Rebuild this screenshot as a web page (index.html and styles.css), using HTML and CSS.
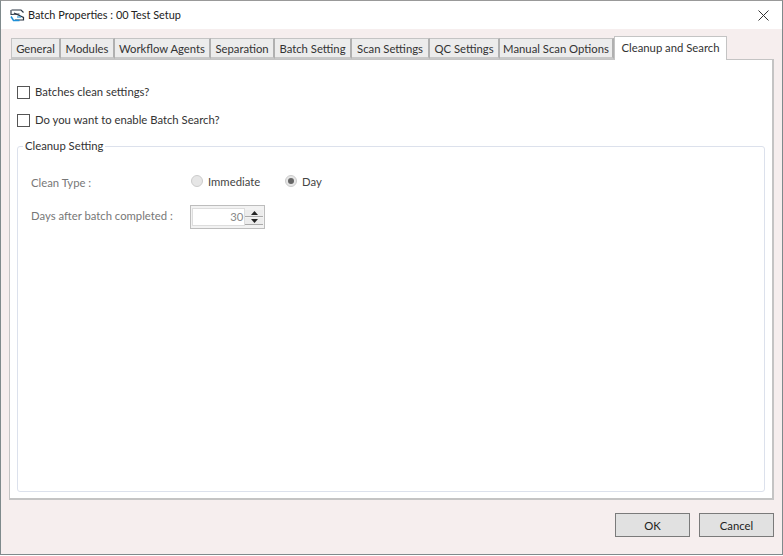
FILE: index.html
```html
<!DOCTYPE html>
<html lang="en">
<head>
<meta charset="utf-8">
<title>Batch Properties</title>
<link rel="stylesheet" href="styles.css">
</head>
<body>
<div class="window">
  <header class="titlebar">
    <svg class="app-icon" width="15" height="13" viewBox="0 0 15 13" fill="none">
      <path d="M1.5 1H11L13.5 3.5" stroke="#2a3442" stroke-width="1.2"/>
      <path d="M1 1V5.5L9.5 5" stroke="#2a3442" stroke-width="1.1"/>
      <path d="M4 4L13.5 8.5V11H5" stroke="#2a3442" stroke-width="1.2"/>
      <path d="M1 7.5L3.5 11.5H9.5" stroke="#1e90d8" stroke-width="1.5"/>
      <path d="M7 8H11" stroke="#1e90d8" stroke-width="1.1"/>
    </svg>
    <span class="title">Batch Properties : 00 Test Setup</span>
    <svg class="close" width="11" height="11" viewBox="0 0 11 11" fill="none">
      <path d="M.5 .5L10.5 10.5M10.5 .5L.5 10.5" stroke="#333" stroke-width="1"/>
    </svg>
  </header>
  <main class="body">
    <nav class="tabs">
      <span class="tab">General</span>
      <span class="tab">Modules</span>
      <span class="tab">Workflow Agents</span>
      <span class="tab">Separation</span>
      <span class="tab">Batch Setting</span>
      <span class="tab">Scan Settings</span>
      <span class="tab">QC Settings</span>
      <span class="tab">Manual Scan Options</span>
      <span class="tab active">Cleanup and Search</span>
    </nav>
    <section class="panel">
      <label class="check"><span class="box"></span>Batches clean settings?</label>
      <label class="check second"><span class="box"></span>Do you want to enable Batch Search?</label>
      <fieldset class="group">
        <legend>Cleanup Setting</legend>
        <div class="row type-row">
          <span class="label">Clean Type :</span>
          <span class="radio"><span class="dot"></span>Immediate</span>
          <span class="radio day"><span class="dot checked"></span>Day</span>
        </div>
        <div class="row days-row">
          <span class="label">Days after batch completed :</span>
          <span class="spin">
            <span class="value">30</span>
            <span class="arrows">
              <span class="arrow"><svg width="7" height="4" viewBox="0 0 7 4"><path d="M3.5 0L7 4H0Z" fill="#222"/></svg></span>
              <span class="arrow"><svg width="7" height="4" viewBox="0 0 7 4"><path d="M0 0H7L3.5 4Z" fill="#222"/></svg></span>
            </span>
          </span>
        </div>
      </fieldset>
    </section>
    <footer class="actions">
      <button class="btn">OK</button>
      <button class="btn">Cancel</button>
    </footer>
  </main>
</div>
</body>
</html>
```
FILE: styles.css
```css
* { box-sizing: border-box; }
html, body { margin: 0; padding: 0; }
body { width: 783px; height: 556px; background: #fff; overflow: hidden; font-family: "Lato", "Open Sans", sans-serif; font-size: 11.3px; color: #333; }
.window { width: 783px; height: 555px; border: 1px solid #7f8a8c; border-top-color: #999; display: flex; flex-direction: column; }
.titlebar { height: 28px; background: #fff; display: flex; align-items: center; padding: 0 13px 0 9px; flex: none; }
.app-icon { flex: none; margin-right: 3px; }
.title { font-size: 10.9px; color: #222; flex: 1; padding-bottom: 1px; }
.close { flex: none; }
.body { flex: 1; background: #f6eeee; padding: 7px 8px 0 8px; display: flex; flex-direction: column; }
.tabs { display: grid; grid-template-columns: 50px 54px 96px 64px 77px 78px 70px 114px 113px; height: 23px; padding-left: 2px; align-items: end; position: relative; z-index: 1; flex: none; }
.tab { height: 21px; background: #ececec; border: 1px solid #c4c4c4; border-right: 2px solid #b0b0b0; border-left: 0; border-bottom: 2px solid #c8c8c8; display: flex; align-items: center; justify-content: center; white-space: nowrap; }
.tab:first-child { border-left: 1px solid #c4c4c4; }
.tab.active { height: 24px; margin-bottom: -1px; background: #fff; border: 1px solid #c4c4c4; border-bottom: 0; padding-bottom: 3px; }
.panel { height: 441px; background: #fff; border: 1px solid #c4c4c4; border-bottom-width: 2px; border-right-width: 2px; padding: 25px 7px 6px 7px; display: flex; flex-direction: column; flex: none; }
.check { display: flex; align-items: flex-start; height: 14px; line-height: 13px; color: #333; }
.check.second { margin-top: 14px; }
.box { width: 13px; height: 13px; background: #fff; border: 1px solid #555; margin: 1px 5px 0 0; flex: none; }
.group { flex: 1; margin: 11px 0 0; min-width: 0; border: 1px solid #dce1ec; border-radius: 3px; padding: 0; }
.group legend { margin-left: 5px; padding: 0 2px; color: #333; line-height: 16px; }
.row { display: flex; align-items: center; color: #777; padding-left: 13px; }
.type-row { height: 18px; margin-top: 19px; }
.days-row { height: 24px; margin-top: 14px; }
.label { width: 159px; flex: none; }
.days-row .label { padding-bottom: 4px; }
.radio { display: flex; align-items: center; color: #444; width: 94px; margin-left: 1px; margin-right: -1px; padding-bottom: 2px; }
.radio.day { width: auto; }
.dot { width: 12px; height: 12px; border-radius: 50%; border: 1px solid #ccc; background: #e6e6e6; margin-right: 5px; display: flex; align-items: center; justify-content: center; flex: none; }
.dot.checked::after { content: ""; width: 6px; height: 6px; border-radius: 50%; background: #666; }
.spin { display: flex; width: 75px; height: 24px; border: 1px solid #bdbdbd; padding: 2px 1px; background: #f2f2f2; }
.value { width: 54px; background: #fff; border: 1px solid #ddd; text-align: right; padding-right: 1px; color: #888; line-height: 16px; }
.arrows { display: flex; flex-direction: column; width: 18px; justify-content: center; gap: 1px; }
.arrow { height: 7px; background: #ececec; border-bottom: 1px solid #aaa; display: flex; align-items: center; justify-content: center; }
.actions { display: flex; justify-content: flex-end; gap: 9px; padding: 13px 0 0; }
.btn { width: 75px; height: 24px; background: #e1e1e1; border: 1px solid #7a7a7a; font: inherit; color: #222; padding: 0; }
```
